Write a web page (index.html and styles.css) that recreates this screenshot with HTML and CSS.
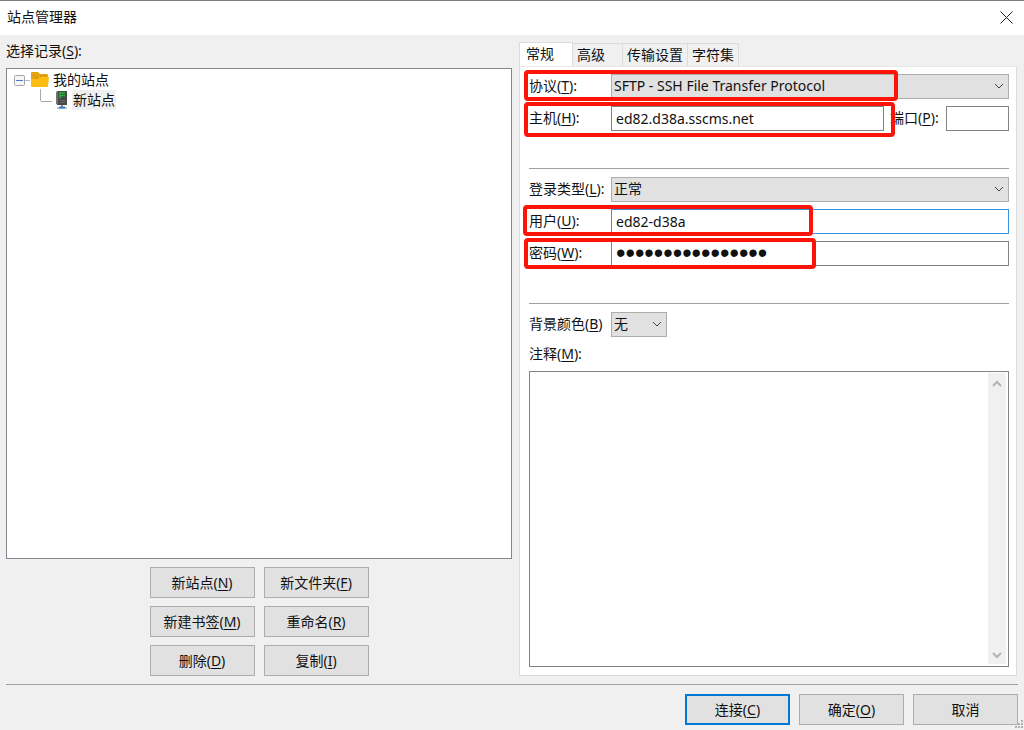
FILE: index.html
```html
<!DOCTYPE html>
<html lang="zh-CN">
<head>
    <meta charset="UTF-8">
    <meta name="viewport" content="width=device-width, initial-scale=1.0">
    <title>站点管理器</title>
    <link rel="stylesheet" href="styles.css">
</head>
<body>
    <header class="titlebar">
        <h1>站点管理器</h1>
        <button class="close" type="button" aria-label="关闭">
            <svg width="13" height="13" viewBox="0 0 13 13"><path d="M.5.5l12 12M12.5.5l-12 12" stroke="#222" fill="none"/></svg>
        </button>
    </header>

    <main class="content">
        <section class="sites">
            <h2 class="sites-label">选择记录(<u>S</u>):</h2>
            <div class="tree">
                <div class="tree-row">
                    <svg width="45" height="20" viewBox="0 0 45 20">
                        <path d="M18 10.5h5M33.5 20v-1" stroke="#b8b8b8"/>
                        <rect x="7.5" y="5.5" width="10" height="10" rx="1" fill="#f6f6f6" stroke="#a4a4a4"/>
                        <path d="M9 10.5h7" stroke="#4c78c8"/>
                        <path d="M24 3q0-1 1-1h6l2 2h7q1 0 1 1v4H24z" fill="#e5a50a"/>
                        <path d="M24 9h7l2-2h9l-1 9q0 1-1 1H25q-1 0-1-1z" fill="#fdbc10"/>
                        <path d="M27 5.5h1M29 7.5h1M33 6.5h1M37 5.5h1" stroke="#b07d10"/>
                    </svg>
                    <span class="tree-name">我的站点</span>
                </div>
                <div class="tree-row">
                    <svg width="65" height="20" viewBox="0 0 65 20">
                        <path d="M33.5 0v11M34 11.5h11" stroke="#aaa" fill="none"/>
                        <path d="M50 1h10v14H50z" fill="#484848"/>
                        <path d="M49 2l2-1v14l-2-1z" fill="#747474"/>
                        <path d="M52 3h6M53 5.5h5M53 2.5v6" stroke="#22b830" stroke-width="1.5"/>
                        <path d="M53 10.5h5M53 12.5h5" stroke="#686868"/>
                        <path d="M55 15v3" stroke="#888" stroke-width="2"/>
                        <path d="M50 18h10" stroke="#888"/>
                        <path d="M52 17.5h6" stroke="#2f7fd0" stroke-width="2"/>
                    </svg>
                    <span class="tree-name selected">新站点</span>
                </div>
            </div>
            <div class="site-actions">
                <button class="btn" type="button">新站点(<u>N</u>)</button>
                <button class="btn" type="button">新文件夹(<u>F</u>)</button>
                <button class="btn" type="button">新建书签(<u>M</u>)</button>
                <button class="btn" type="button">重命名(<u>R</u>)</button>
                <button class="btn" type="button">删除(<u>D</u>)</button>
                <button class="btn" type="button">复制(<u>I</u>)</button>
            </div>
        </section>

        <section class="settings">
            <div class="tabs" role="tablist">
                <button class="tab active" type="button" role="tab" aria-selected="true">常规</button>
                <button class="tab tab-wide" type="button" role="tab">高级</button>
                <button class="tab" type="button" role="tab">传输设置</button>
                <button class="tab" type="button" role="tab">字符集</button>
            </div>
            <form class="panel">
                <div class="group">
                    <div class="row">
                        <label for="protocol">协议(<u>T</u>):</label>
                        <div class="select">
                            <select id="protocol"><option>SFTP - SSH File Transfer Protocol</option></select>
                            <svg width="10" height="6" viewBox="0 0 10 6"><path d="M1 1l4 4 4-4" stroke="#444" fill="none"/></svg>
                        </div>
                        <span class="mark mark-protocol"></span>
                    </div>
                    <div class="row">
                        <label for="host">主机(<u>H</u>):</label>
                        <input id="host" type="text" value="ed82.d38a.sscms.net">
                        <label class="port-label" for="port">端口(<u>P</u>):</label>
                        <input id="port" class="port" type="text">
                        <span class="mark mark-host"></span>
                    </div>
                </div>
                <div class="group">
                    <div class="row">
                        <label for="logontype">登录类型(<u>L</u>):</label>
                        <div class="select">
                            <select id="logontype"><option>正常</option></select>
                            <svg width="10" height="6" viewBox="0 0 10 6"><path d="M1 1l4 4 4-4" stroke="#444" fill="none"/></svg>
                        </div>
                    </div>
                    <div class="row">
                        <label for="user">用户(<u>U</u>):</label>
                        <input id="user" class="focused" type="text" value="ed82-d38a">
                        <span class="mark mark-user"></span>
                    </div>
                    <div class="row">
                        <label for="pass">密码(<u>W</u>):</label>
                        <input id="pass" type="password" value="abcdefgh12345678">
                        <span class="mark mark-pass"></span>
                    </div>
                </div>
                <div class="group group-last">
                    <div class="row">
                        <label for="color">背景颜色(<u>B</u>)</label>
                        <div class="select select-small">
                            <select id="color"><option>无</option></select>
                            <svg width="10" height="6" viewBox="0 0 10 6"><path d="M1 1l4 4 4-4" stroke="#444" fill="none"/></svg>
                        </div>
                    </div>
                    <label class="comments-label" for="comments">注释(<u>M</u>):</label>
                    <div class="comments">
                        <textarea id="comments"></textarea>
                        <div class="scrollbar">
                            <svg width="10" height="7" viewBox="0 0 10 7"><path d="M1 6l4-4 4 4" stroke="#b4b4b4" stroke-width="2" fill="none"/></svg>
                            <svg width="10" height="7" viewBox="0 0 10 7"><path d="M1 1l4 4 4-4" stroke="#b4b4b4" stroke-width="2" fill="none"/></svg>
                        </div>
                    </div>
                </div>
            </form>
        </section>
    </main>

    <footer class="footer">
        <button class="btn default" type="button">连接(<u>C</u>)</button>
        <button class="btn" type="button">确定(<u>O</u>)</button>
        <button class="btn" type="button">取消</button>
        <svg class="grip" width="10" height="10" viewBox="0 0 10 10"><path d="M7 1h2M4 4h2M7 4h2M1 7h2M4 7h2M7 7h2" stroke="#b0b0b0" stroke-width="2"/></svg>
    </footer>
</body>
</html>
```

FILE: styles.css
```css
* {
    box-sizing: border-box;
}

body {
    display: flex;
    flex-direction: column;
    min-height: 100vh;
    margin: 0;
    background: #f0f0f0;
    color: #111;
    font-family: "Noto Sans", "Noto Sans CJK SC", sans-serif;
    font-size: 14px;
    line-height: 20px;
}

button, input, select, textarea {
    margin: 0;
    color: inherit;
    font: inherit;
}

h1, h2 {
    margin: 0;
    font-size: 14px;
    font-weight: normal;
}

u {
    text-underline-offset: 2px;
}

.titlebar {
    display: flex;
    align-items: center;
    justify-content: space-between;
    height: 35px;
    padding: 0 11px 2px 7px;
    border-top: 1px solid #808080;
    background: #fff;
}

.close {
    display: flex;
    padding: 0;
    border: none;
    background: none;
}

.content {
    flex: 1;
    display: grid;
    grid-template-columns: 506fr 498fr;
    gap: 7px;
    padding: 0 7px 8px 6px;
}

.sites, .settings {
    display: flex;
    flex-direction: column;
    min-width: 0;
}

.sites-label {
    padding: 6px 0 7px;
}

.tree {
    flex: 1;
    padding-top: 1px;
    border: 1px solid #828790;
    background: #fff;
}

.tree-row {
    display: flex;
    height: 20px;
}

.tree-name {
    padding: 0 1px;
}

.tree-row .selected {
    background: #f0f0f0;
}

.site-actions {
    display: grid;
    grid-template-columns: 105px 105px;
    justify-content: center;
    gap: 8px 9px;
    padding-top: 8px;
}

.btn {
    width: 105px;
    height: 31px;
    padding: 0;
    border: 1px solid #adadad;
    background: #e1e1e1;
}

.btn.default {
    border: 2px solid #0078d7;
}

/* tabs */
.tabs {
    display: flex;
    align-items: flex-end;
    padding-top: 7px;
}

.tab {
    height: 23px;
    padding: 0 4px;
    border: 1px solid #dcdcdc;
    border-left: none;
    border-bottom: none;
    background: #f0f0f0;
}

.tab-wide {
    padding-right: 17px;
}

.tab.active {
    height: 24px;
    padding: 0 18px 1px 6px;
    border-left: 1px solid #dcdcdc;
    background: #fff;
}

.panel {
    flex: 1;
    display: flex;
    flex-direction: column;
    padding: 7px 7px 8px 9px;
    border: 1px solid #dcdcdc;
    border-top-color: #e8e8e8;
    background: #fff;
}

.group {
    display: flex;
    flex-direction: column;
    gap: 7px;
    margin-bottom: 8px;
    padding-bottom: 37px;
    border-bottom: 1px solid #a0a0a0;
}

.group-last {
    flex: 1;
    margin: 0;
    padding: 0;
    border: none;
}

.row {
    position: relative;
    display: flex;
    align-items: center;
    height: 25px;
}

.row label {
    flex: 0 0 auto;
    min-width: 82px;
    padding-bottom: 1px;
}

.row input {
    flex: 1;
    min-width: 0;
    height: 25px;
    padding: 0 4px 1px;
    border: 1px solid #838383;
    border-radius: 0;
    background: #fff;
    outline: none;
}

/* larger bullets */
.row input[type="password"] {
    font-family: "Liberation Sans", sans-serif;
    font-size: 27px;
}

.row .focused {
    border-color: #3a94e0;
}

.row .port-label {
    min-width: 56px;
    margin-left: 6px;
}

.row .port {
    flex: 0 0 63px;
}

.select {
    position: relative;
    flex: 1;
    height: 25px;
}

.select select {
    width: 100%;
    height: 25px;
    padding: 0 2px 1px;
    border: 1px solid #adadad;
    border-radius: 0;
    background: #e1e1e1;
    appearance: none;
}

.select svg {
    position: absolute;
    top: 9px;
    right: 5px;
    pointer-events: none;
}

.select-small {
    flex: 0 0 56px;
}

/* red frames over the fields to fill in */
.mark {
    position: absolute;
    border: 4px solid #fc1408;
    border-radius: 4px;
    pointer-events: none;
}

.mark-protocol {
    top: -4px;
    left: -5px;
    width: 374px;
    height: 31px;
}

.mark-host {
    top: -4px;
    left: -5px;
    width: 371px;
    height: 35px;
}

.mark-user {
    top: -4px;
    left: -6px;
    width: 290px;
    height: 31px;
}

.mark-pass {
    top: -3px;
    left: -5px;
    width: 292px;
    height: 31px;
}

.comments-label {
    line-height: 20px;
}

.comments {
    flex: 1;
    display: flex;
    padding: 1px 2px 2px 1px;
    border: 1px solid #838383;
}

.comments textarea {
    flex: 1;
    min-width: 0;
    padding: 2px;
    border: none;
    outline: none;
    resize: none;
}

.scrollbar {
    display: flex;
    flex-direction: column;
    align-items: center;
    justify-content: space-between;
    width: 18px;
    padding: 7px 0 5px;
    background: #f0f0f0;
}

.footer {
    position: relative;
    display: flex;
    justify-content: flex-end;
    gap: 9px;
    margin-left: 6px;
    margin-right: 6px;
    padding: 9px 0 5px;
    border-top: 1px solid #a0a0a0;
}

.grip {
    position: absolute;
    right: -6px;
    bottom: 0;
}
```
